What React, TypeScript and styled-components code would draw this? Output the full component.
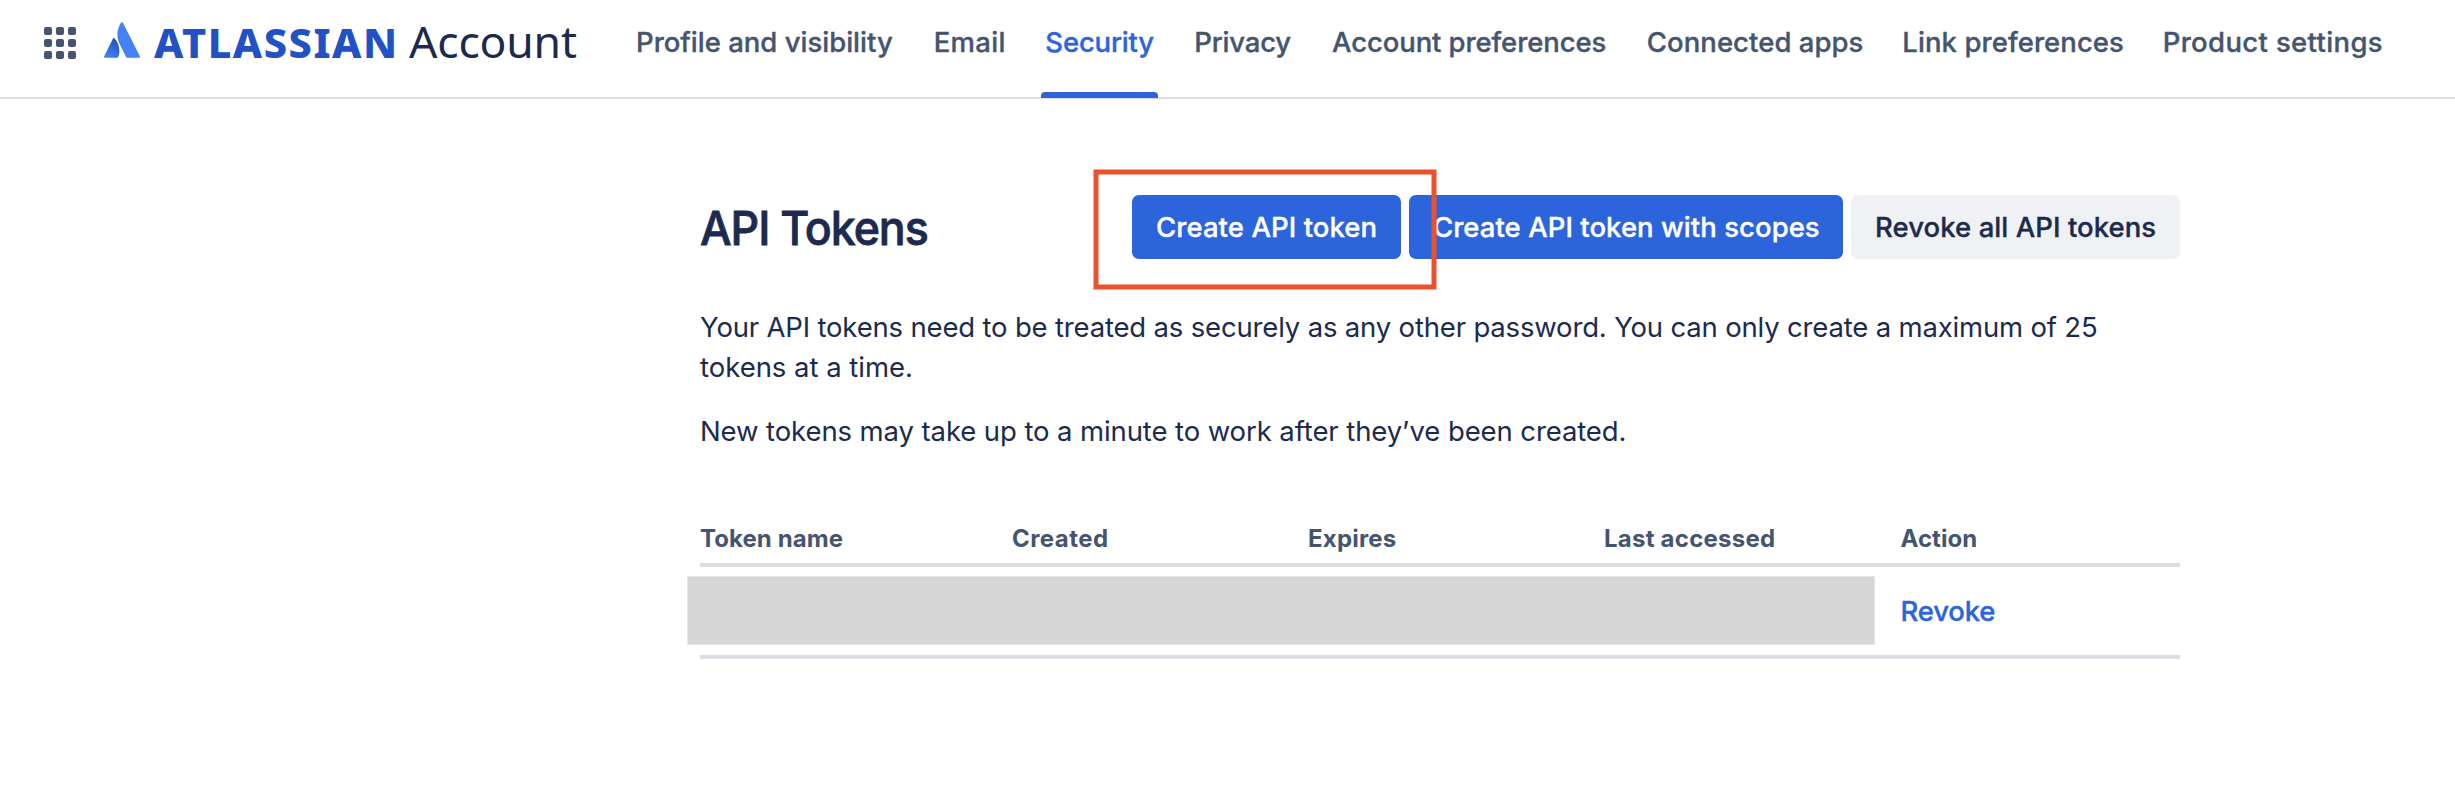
import React from 'react';
import styled, { createGlobalStyle, css } from 'styled-components';

const color = {
  text: '#1C2B4D',
  subtle: '#46556F',
  brand: '#2C64DC',
  wordmark: '#2151C5',
  line: '#DCDEE4',
};

const medium = css`
  font-weight: 500;
  -webkit-text-stroke: 0.35px currentColor;
`;

const GlobalStyle = createGlobalStyle`
  *, *::before, *::after { box-sizing: border-box; }
  body {
    margin: 0;
    background: #fff;
    color: ${color.text};
    font-family: Inter, "Liberation Sans", sans-serif;
    font-size: 27.5px;
    line-height: 40px;
  }
`;

const Page = styled.div`
  min-height: 808px;
  overflow: hidden;
`;

const Header = styled.header`
  display: flex;
  align-items: flex-start;
  height: 99px;
  padding-left: 44px;
  border-bottom: 2px solid ${color.line};
  white-space: nowrap;
`;

const SwitcherButton = styled.button`
  display: grid;
  grid-template-columns: repeat(3, 8px);
  grid-auto-rows: 8px;
  gap: 4px;
  margin: 27px 28px 0 0;
  padding: 0;
  border: 0;
  background: none;
`;

const Dot = styled.span`
  border-radius: 2px;
  background: ${color.subtle};
`;

const Mark = styled.svg`
  display: block;
  width: 36px;
  height: 36px;
  margin-top: 22px;
`;

const Brand = styled.div`
  display: flex;
  align-items: baseline;
  width: 477.6px;
  margin: 16px 0 0 14px;
  font-family: "Noto Sans", "Open Sans", sans-serif;
  line-height: 50px;
`;

const Company = styled.span`
  width: 255px;
  color: ${color.wordmark};
  font-size: 41.5px;
  font-weight: 800;
  letter-spacing: 1.5px;
`;

const Product = styled.span`
  font-size: 44.5px;
  letter-spacing: -0.2px;
`;

const Nav = styled.nav`
  display: flex;
  gap: 32px;
`;

const Tab = styled.a<{ $width: number; $tracking: number; $active?: boolean }>`
  position: relative;
  flex: none;
  width: ${(p) => p.$width}px;
  height: 97px;
  padding: 22px 0 0 4.4px;
  color: ${(p) => (p.$active ? color.brand : color.subtle)};
  ${medium}
  letter-spacing: ${(p) => p.$tracking}px;

  &::after {
    content: '';
    display: ${(p) => (p.$active ? 'block' : 'none')};
    position: absolute;
    left: 0;
    right: 0;
    bottom: -1px;
    height: 6px;
    border-radius: 4px 4px 0 0;
    background: ${color.brand};
  }
`;

const Main = styled.main`
  width: 1480px;
  margin: 96px 0 0 700px;
`;

const TitleRow = styled.div`
  display: flex;
  justify-content: space-between;
  height: 64px;
`;

const Title = styled.h1`
  margin: 1px 0 0;
  font-size: 47px;
  font-weight: 500;
  -webkit-text-stroke: 0.8px currentColor;
  line-height: 64px;
  letter-spacing: -1.1px;
  white-space: nowrap;
  transform: scaleX(0.95);
  transform-origin: left;
`;

const Actions = styled.div`
  position: relative;
  display: flex;
  gap: 8px;
`;

const Button = styled.button<{ $width: number; $tracking: number; $subtle?: boolean }>`
  width: ${(p) => p.$width}px;
  height: 64px;
  padding: 0 0 0 24px;
  border: 0;
  border-radius: 7px;
  background: ${(p) => (p.$subtle ? '#F0F1F4' : color.brand)};
  color: ${(p) => (p.$subtle ? color.text : '#fff')};
  font-family: inherit;
  font-size: inherit;
  line-height: inherit;
  ${medium}
  letter-spacing: ${(p) => p.$tracking}px;
  text-align: left;
  white-space: nowrap;
`;

const Highlight = styled.svg`
  position: absolute;
  left: -39px;
  top: -26px;
  width: 344px;
  height: 121px;
  pointer-events: none;
`;

const Copy = styled.div`
  margin-top: 48px;
`;

const Paragraph = styled.p`
  margin: 0 0 24px;
`;

const Line = styled.span<{ $tracking: number }>`
  display: block;
  letter-spacing: ${(p) => p.$tracking}px;
  white-space: nowrap;
`;

const Table = styled.div`
  margin-top: 64px;
`;

const Row = styled.div`
  display: grid;
  grid-template-columns: 312px 296px 296px 296.5px 1fr;
  border-bottom: 4px solid ${color.line};
`;

const HeadRow = styled(Row)`
  height: 52px;
  color: ${color.subtle};
  font-size: 24px;
  font-weight: 700;
  line-height: 47px;
`;

const BodyRow = styled(Row)`
  height: 92px;
`;

const HeadCell = styled.div<{ $tracking: number }>`
  letter-spacing: ${(p) => p.$tracking}px;
  white-space: nowrap;
`;

const Redacted = styled.div`
  grid-column: span 4;
  width: 1188px;
  height: 69px;
  margin: 9px 0 0 -13px;
  border: 1px solid #e6e6e6;
  background: #d6d6d6;
`;

const RevokeLink = styled.a`
  color: ${color.brand};
  ${medium}
  letter-spacing: -0.2px;
  line-height: 88px;
`;

const tabs = [
  { label: 'Profile and visibility', width: 265.7, tracking: 0 },
  { label: 'Email', width: 79.7, tracking: 0.3 },
  { label: 'Security', width: 117, tracking: -0.2, active: true },
  { label: 'Privacy', width: 105.6, tracking: -0.2 },
  { label: 'Account preferences', width: 282.9, tracking: -0.1 },
  { label: 'Connected apps', width: 223.5, tracking: 0.05 },
  { label: 'Link preferences', width: 228.3, tracking: 0.07 },
  { label: 'Product settings', width: 226, tracking: 0.35 },
];

const columns = [
  { label: 'Token name', tracking: 0.08 },
  { label: 'Created', tracking: 0.45 },
  { label: 'Expires', tracking: 0.2 },
  { label: 'Last accessed', tracking: 0.24 },
  { label: 'Action', tracking: 0.04 },
];

function AtlassianMark() {
  return (
    <Mark viewBox="0 0 36 36" aria-hidden="true">
      <defs>
        <linearGradient id="peak" x1="15" y1="19" x2="5" y2="36" gradientUnits="userSpaceOnUse">
          <stop offset="0" stopColor="#1F4FBF" />
          <stop offset="1" stopColor="#4481F7" />
        </linearGradient>
      </defs>
      <path
        d="M10.6 16.6C10.2 15.9 9.3 15.9 8.9 16.7L.2 34.2C-.2 35 .2 35.7 1 35.7H13.2C13.7 35.7 14.1 35.4 14.3 35C16.6 29.8 15.4 21.6 10.6 16.6Z"
        fill="url(#peak)"
      />
      <path
        d="M16.9 .8C12.4 8 12.6 16 15.7 22.2L22.1 35C22.3 35.4 22.7 35.7 23.2 35.7H35C35.8 35.7 36.3 34.9 35.9 34.2L18.9 .8C18.5-.1 17.4-.1 16.9 .8Z"
        fill="#4481F7"
      />
    </Mark>
  );
}

export default function App() {
  return (
    <Page>
      <GlobalStyle />
      <Header>
        <SwitcherButton aria-label="Switch to">
          {Array.from({ length: 9 }, (_, i) => (
            <Dot key={i} />
          ))}
        </SwitcherButton>
        <AtlassianMark />
        <Brand>
          <Company>ATLASSIAN</Company>
          <Product>Account</Product>
        </Brand>
        <Nav>
          {tabs.map((t) => (
            <Tab key={t.label} $width={t.width} $tracking={t.tracking} $active={t.active}>
              {t.label}
            </Tab>
          ))}
        </Nav>
      </Header>
      <Main>
        <TitleRow>
          <Title>API Tokens</Title>
          <Actions>
            <Button $width={269} $tracking={0.07}>Create API token</Button>
            <Button $width={434} $tracking={0.04}>Create API token with scopes</Button>
            <Button $width={329} $tracking={0.06} $subtle>Revoke all API tokens</Button>
            <Highlight viewBox="0 0 344 121">
              <rect x="3" y="3" width="338" height="115" fill="none" stroke="#EC512D" strokeWidth="5" />
            </Highlight>
          </Actions>
        </TitleRow>
        <Copy>
          <Paragraph>
            <Line $tracking={-0.174}>
              Your API tokens need to be treated as securely as any other password. You can only create a maximum of 25
            </Line>
            <Line $tracking={-0.02}>tokens at a time.</Line>
          </Paragraph>
          <Paragraph>
            <Line $tracking={-0.1}>New tokens may take up to a minute to work after they’ve been created.</Line>
          </Paragraph>
        </Copy>
        <Table>
          <HeadRow>
            {columns.map((c) => (
              <HeadCell key={c.label} $tracking={c.tracking}>{c.label}</HeadCell>
            ))}
          </HeadRow>
          <BodyRow>
            <Redacted />
            <RevokeLink>Revoke</RevokeLink>
          </BodyRow>
        </Table>
      </Main>
    </Page>
  );
}
